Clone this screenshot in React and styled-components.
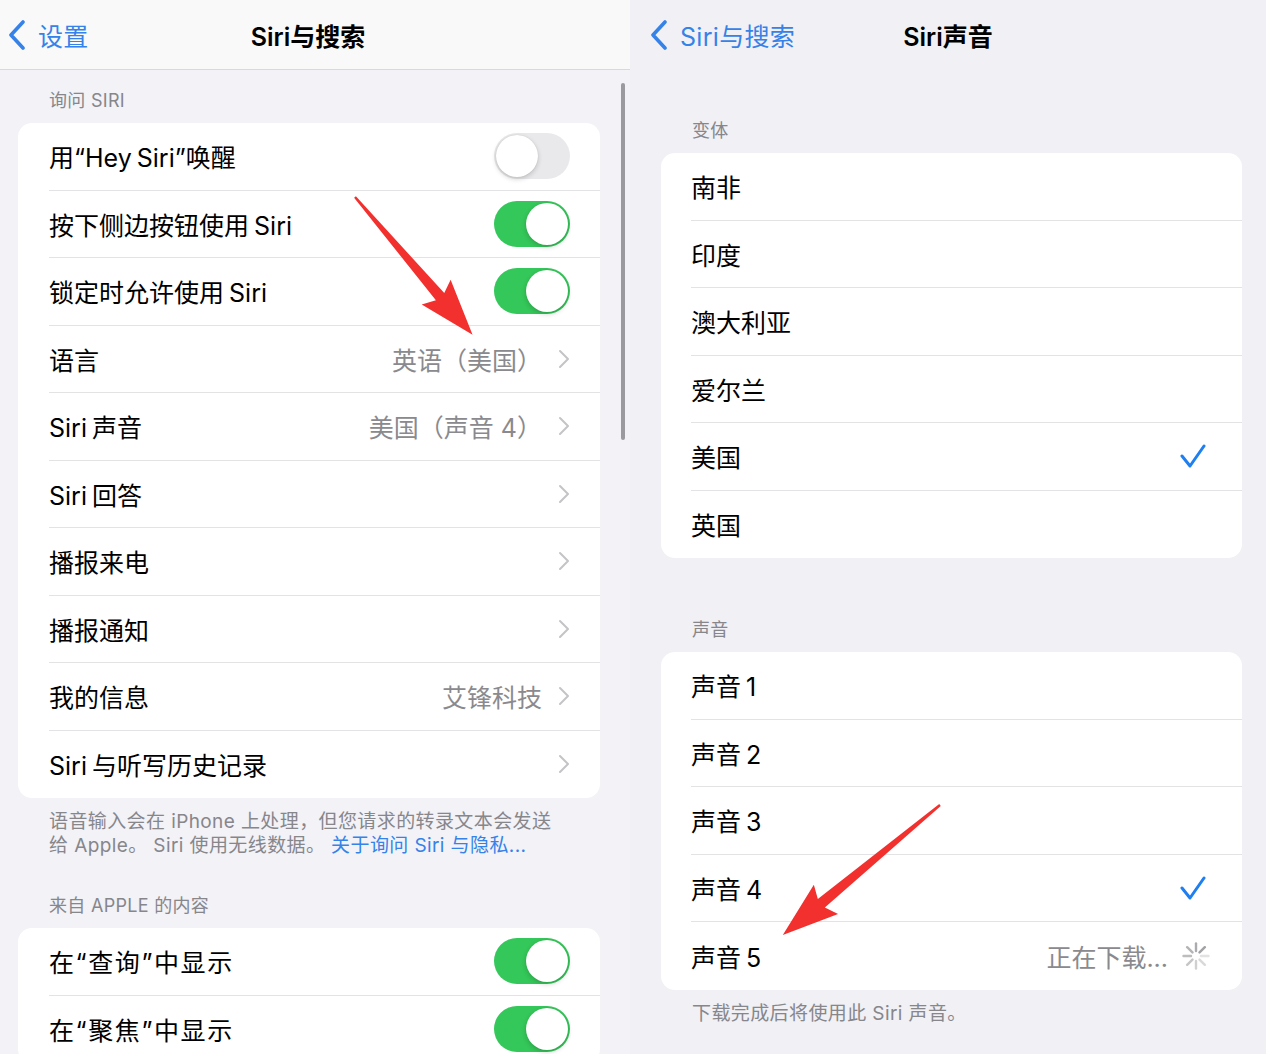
import React from "react";
import styled, { createGlobalStyle } from "styled-components";

const GlobalStyle = createGlobalStyle`
  body {
    margin: 0;
    background: #f2f2f7;
    font-family: "Inter", "Noto Sans CJK SC", sans-serif;
  }
`;

const Screen = styled.div`
  position: relative;
  display: flex;
  width: 1266px;
  height: 1054px;
  overflow: hidden;
`;

const Panel = styled.div`
  position: relative;
  display: flex;
  flex-direction: column;
  width: ${(p) => p.$width}px;
  flex-shrink: 0;
  background: ${(p) => p.$bg};
`;

const NavBar = styled.div`
  display: grid;
  grid-template-columns: 1fr auto 1fr;
  align-items: center;
  flex-shrink: 0;
  height: 70px;
  box-sizing: border-box;
  padding: 0 ${(p) => p.$padRight || 0}px 0 ${(p) => p.$padLeft || 0}px;
  background: ${(p) => (p.$bar ? "#f9f9f9" : "transparent")};
  border-bottom: 1px solid ${(p) => (p.$bar ? "#d9d9dc" : "transparent")};
`;

const BackLink = styled.div`
  display: flex;
  align-items: center;
  gap: 12px;
  color: #3582e8;
  font-size: 25px;
  letter-spacing: 0.3px;
`;

const Title = styled.div`
  font-size: 25px;
  font-weight: 600;
  color: #000;
`;

const Content = styled.div`
  flex-shrink: 0;
  padding: 0 ${(p) => p.$right}px 0 ${(p) => p.$left}px;
`;

const SectionHeader = styled.div`
  display: flex;
  align-items: flex-end;
  box-sizing: border-box;
  height: ${(p) => p.$height}px;
  padding: 0 0 12px 31px;
  font-size: 18px;
  line-height: 20px;
  letter-spacing: 0.3px;
  color: #86868b;
`;

const Card = styled.div`
  background: #fff;
  border-radius: 14px;
  overflow: hidden;
`;

const Row = styled.div`
  display: flex;
  align-items: center;
  height: 67.5px;
  padding-left: ${(p) => p.$indent}px;
`;

const RowInner = styled.div`
  flex: 1;
  display: flex;
  align-items: center;
  height: 100%;
  padding-right: ${(p) => p.$right}px;
  border-bottom: ${(p) => (p.$last ? "none" : "1px solid #e3e3e6")};
  box-sizing: border-box;
`;

const Label = styled.div`
  flex: 1;
  font-size: 25px;
  color: #000;
  white-space: nowrap;
  word-spacing: -2px;
  letter-spacing: ${(p) => p.$spacing || 0}px;
`;

const Value = styled.div`
  font-size: 25px;
  color: #8a8a8e;
  margin-right: ${(p) => p.$gap ?? 16}px;
  white-space: nowrap;
`;

const Toggle = styled.div`
  position: relative;
  width: 76px;
  height: 46px;
  border-radius: 23px;
  background: ${(p) => (p.$on ? "#34c759" : "#e9e9eb")};
  &::after {
    content: "";
    position: absolute;
    top: 2px;
    left: ${(p) => (p.$on ? "32px" : "2px")};
    width: 42px;
    height: 42px;
    border-radius: 50%;
    background: #fff;
    box-shadow: 0 2px 5px rgba(0, 0, 0, 0.18), 0 0 1px rgba(0, 0, 0, 0.15);
  }
`;

const Footer = styled.div`
  padding: 12px 0 0 31px;
  font-size: 19px;
  line-height: 24px;
  letter-spacing: 0.4px;
  color: #86868b;
  white-space: nowrap;
`;

const Link = styled.span`
  color: #3582e8;
`;

const Scrollbar = styled.div`
  position: absolute;
  left: 621px;
  top: 83px;
  width: 4px;
  height: 357px;
  border-radius: 2px;
  background: #9b9b9f;
`;

const Overlay = styled.svg`
  position: absolute;
  left: 0;
  top: 0;
  pointer-events: none;
`;

const BackChevron = () => (
  <svg width="18" height="30" viewBox="0 0 18 30">
    <polyline points="15,2 3,15 15,28" fill="none" stroke="#3582e8" strokeWidth="3.6" strokeLinecap="round" strokeLinejoin="round" />
  </svg>
);

const Chevron = () => (
  <svg width="12" height="20" viewBox="0 0 12 20">
    <polyline points="2,2 10,10 2,18" fill="none" stroke="#c4c4c7" strokeWidth="2" strokeLinecap="round" strokeLinejoin="round" />
  </svg>
);

const Check = () => (
  <svg width="26" height="24" viewBox="0 0 26 24">
    <polyline points="2,12 10,22 24,2" fill="none" stroke="#1f7ff0" strokeWidth="3" strokeLinecap="round" strokeLinejoin="round" />
  </svg>
);

const Spinner = () => {
  const spokes = [];
  for (let i = 0; i < 8; i++) {
    const a = (i * Math.PI) / 4;
    spokes.push(
      <line
        key={i}
        x1={14 + Math.cos(a) * 5}
        y1={14 + Math.sin(a) * 5}
        x2={14 + Math.cos(a) * 12.5}
        y2={14 + Math.sin(a) * 12.5}
        stroke="#8e8e93"
        strokeWidth="2.4"
        strokeLinecap="round"
        opacity={0.25 + (i / 8) * 0.65}
      />
    );
  }
  return (
    <svg width="28" height="28" viewBox="0 0 28 28">
      {spokes}
    </svg>
  );
};

const Arrow = ({ x, y, angle, length }) => {
  const L = length;
  const pts = [
    [0, -1.2],
    [L - 50, -5.5],
    [L - 56, -19],
    [L, 0],
    [L - 56, 19],
    [L - 50, 5.5],
    [0, 1.2],
  ]
    .map((p) => p.join(","))
    .join(" ");
  return (
    <g transform={`translate(${x} ${y}) rotate(${angle})`}>
      <polygon points={pts} fill="#f2302e" />
    </g>
  );
};

const askSiri = [
  { label: "用“Hey Siri”唤醒", toggle: false },
  { label: "按下侧边按钮使用 Siri", toggle: true },
  { label: "锁定时允许使用 Siri", toggle: true },
  { label: "语言", value: "英语（美国）" },
  { label: "Siri 声音", value: "美国（声音 4）" },
  { label: "Siri 回答", value: "" },
  { label: "播报来电", value: "" },
  { label: "播报通知", value: "" },
  { label: "我的信息", value: "艾锋科技" },
  { label: "Siri 与听写历史记录", value: "" },
];

const appleContent = [
  { label: "在“查询”中显示", toggle: true, spacing: 1.6 },
  { label: "在“聚焦”中显示", toggle: true, spacing: 1.6 },
];

const variants = ["南非", "印度", "澳大利亚", "爱尔兰", "美国", "英国"];
const voices = ["声音 1", "声音 2", "声音 3", "声音 4", "声音 5"];

const SettingRow = ({ item, last }) => (
  <Row $indent={31}>
    <RowInner $right={30} $last={last}>
      <Label $spacing={item.spacing}>{item.label}</Label>
      {item.toggle !== undefined ? (
        <Toggle $on={item.toggle} />
      ) : (
        <>
          {item.value && <Value>{item.value}</Value>}
          <Chevron />
        </>
      )}
    </RowInner>
  </Row>
);

const App = () => {
  return (
    <>
      <GlobalStyle />
      <Screen>
        <Panel $width={630} $bg="#f2f2f7">
          <NavBar $bar $padLeft={8} $padRight={22}>
            <BackLink>
              <BackChevron />
              设置
            </BackLink>
            <Title>Siri与搜索</Title>
            <div />
          </NavBar>
          <Content $left={18} $right={30}>
            <SectionHeader $height={53}>询问 SIRI</SectionHeader>
            <Card>
              {askSiri.map((item, i) => (
                <SettingRow key={item.label} item={item} last={i === askSiri.length - 1} />
              ))}
            </Card>
            <Footer>
              语音输入会在 iPhone 上处理，但您请求的转录文本会发送
              <br />
              给 Apple。 Siri 使用无线数据。 <Link>关于询问 Siri 与隐私...</Link>
            </Footer>
            <SectionHeader $height={70}>来自 APPLE 的内容</SectionHeader>
            <Card>
              {appleContent.map((item, i) => (
                <SettingRow key={item.label} item={item} last={i === appleContent.length - 1} />
              ))}
            </Card>
          </Content>
          <Scrollbar />
        </Panel>

        <Panel $width={636} $bg="#f0f0f5">
          <NavBar $padLeft={20} $padRight={20}>
            <BackLink>
              <BackChevron />
              Siri与搜索
            </BackLink>
            <Title>Siri声音</Title>
            <div />
          </NavBar>
          <Content $left={31} $right={24}>
            <SectionHeader $height={83}>变体</SectionHeader>
            <Card>
              {variants.map((v, i) => (
                <Row key={v} $indent={30}>
                  <RowInner $right={36} $last={i === variants.length - 1}>
                    <Label>{v}</Label>
                    {v === "美国" && <Check />}
                  </RowInner>
                </Row>
              ))}
            </Card>
            <SectionHeader $height={94}>声音</SectionHeader>
            <Card>
              {voices.map((v, i) => (
                <Row key={v} $indent={30}>
                  <RowInner $right={i === 4 ? 32 : 36} $last={i === voices.length - 1}>
                    <Label>{v}</Label>
                    {i === 3 && <Check />}
                    {i === 4 && (
                      <>
                        <Value $gap={14}>正在下载...</Value>
                        <Spinner />
                      </>
                    )}
                  </RowInner>
                </Row>
              ))}
            </Card>
            <Footer>下载完成后将使用此 Siri 声音。</Footer>
          </Content>
        </Panel>

        <Overlay width="1266" height="1054">
          <Arrow x={355} y={197} angle={49.5} length={181} />
          <Arrow x={940} y={805} angle={140.4} length={204} />
        </Overlay>
      </Screen>
    </>
  );
};

export default App;
